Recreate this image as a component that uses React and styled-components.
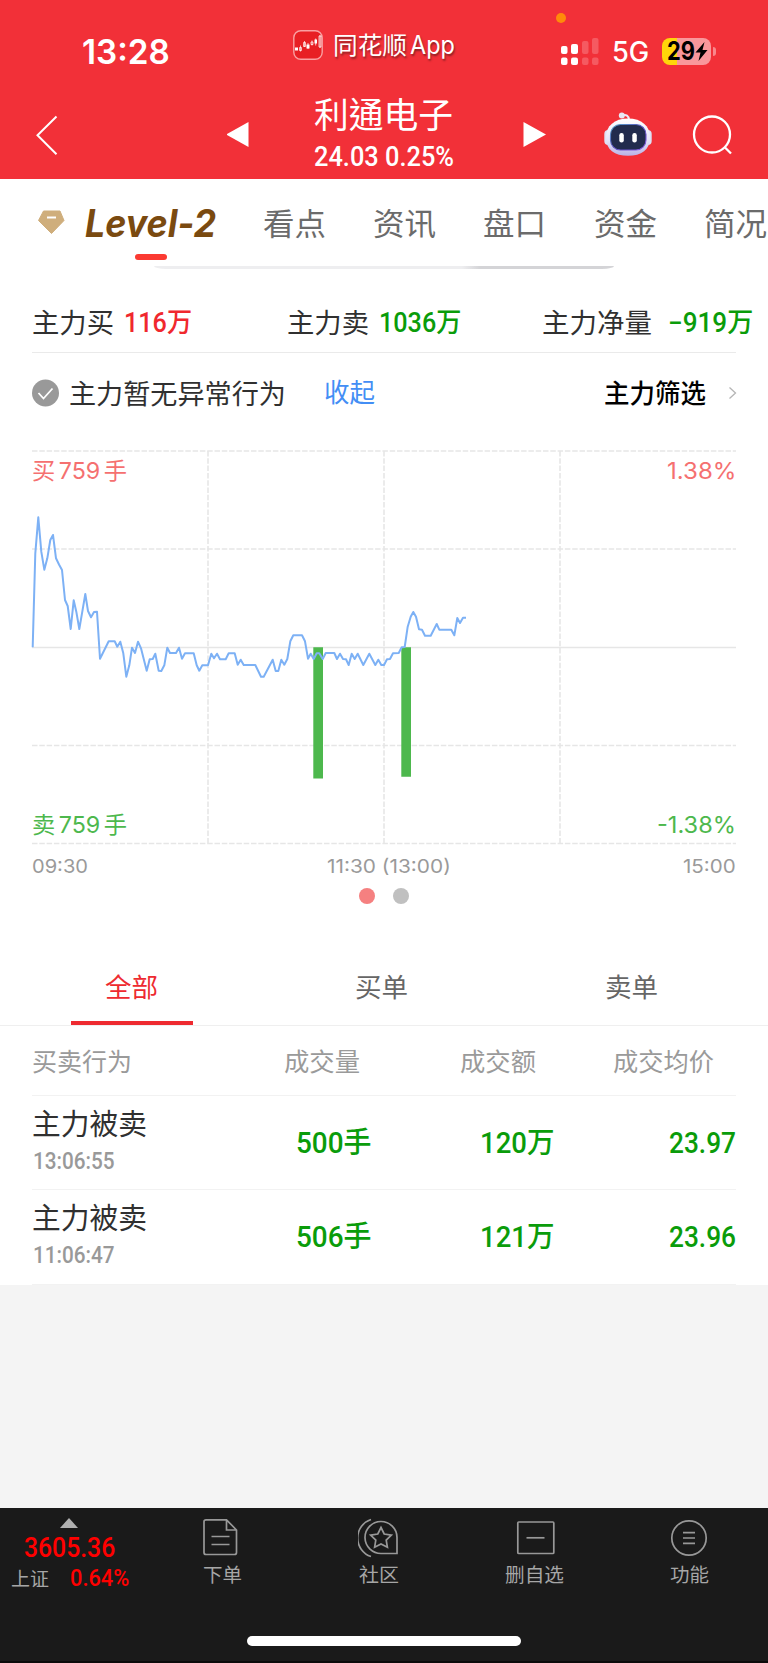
import React, { useLayoutEffect, useRef, useState } from "react";
import styled, { createGlobalStyle } from "styled-components";

const GlobalStyle = createGlobalStyle`
  *, *::before, *::after { box-sizing: border-box; }
  body { margin: 0; background: #f4f4f4; font-family: "Noto Sans CJK SC", "Noto Sans", sans-serif; }
`;

const families = {
  cjk: '"Noto Sans CJK SC", sans-serif',
  tc: '"Noto Sans CJK TC", sans-serif',
  num: 'Roboto, "Noto Sans CJK SC", sans-serif',
  ui: 'Inter, "Noto Sans CJK SC", sans-serif',
};

const FitBox = styled.span`
  display: block;
  flex: none;
  width: ${(p) => p.$w}px;
  height: ${(p) => p.$size}px;
  margin-top: ${(p) => p.$dy || 0}px;
  margin-left: ${(p) => p.$ml || 0}px;
`;

const FitText = styled.span`
  display: inline-block;
  white-space: pre;
  transform-origin: 0 50%;
  font-family: ${(p) => families[p.$font || "cjk"]};
  font-size: ${(p) => p.$size}px;
  line-height: ${(p) => p.$size}px;
  font-weight: ${(p) => p.$weight || 400};
  font-style: ${(p) => (p.$italic ? "italic" : "normal")};
  word-spacing: ${(p) => p.$gap || 0}px;
  color: ${(p) => p.$color || "inherit"};
  text-shadow: ${(p) => p.$shadow || "none"};
  vertical-align: top;
`;

/* Text condensed or widened horizontally to fill a given width. */
function Label({ w, size, dy, ml, children, ...rest }) {
  const ref = useRef(null);
  const [scale, setScale] = useState(1);
  useLayoutEffect(() => {
    setScale(w / ref.current.offsetWidth);
  }, [w, children]);
  const style = { transform: `scaleX(${scale})` };
  const look = Object.fromEntries(Object.entries(rest).map(([k, v]) => ["$" + k, v]));
  return (
    <FitBox $w={w} $size={size} $dy={dy} $ml={ml}>
      <FitText ref={ref} $size={size} {...look} style={style}>{children}</FitText>
    </FitBox>
  );
}

const Screen = styled.div`
  width: 768px;
  height: 1663px;
  display: flex;
  flex-direction: column;
  background: #f4f4f4;
  overflow: hidden;
`;

/* ---------- header ---------- */
const Header = styled.header`
  flex: none;
  height: 179px;
  background: #f23038;
  color: #fff;
  position: relative;
`;
const StatusBar = styled.div`
  height: 90px;
  padding: 29px 0 0 82px;
  display: flex;
  align-items: flex-start;
`;
const AppIcon = styled.svg`margin: 1px 0 0 123px;`;
const Signal = styled.svg`margin: 8px 0 0 105px;`;
const Battery = styled.div`
  position: relative;
  width: 49px;
  height: 27px;
  margin: 9px 0 0 13px;
  padding: 0 3px 0 5px;
  border-radius: 8px;
  background: linear-gradient(90deg, #ffd60a 15px, #f9979b 15px);
  display: flex;
  align-items: center;
  &::after {
    content: "";
    position: absolute;
    right: -5px;
    top: 9px;
    width: 3px;
    height: 9px;
    border-radius: 0 4px 4px 0;
    background: #f9878c;
  }
`;
const Recording = styled.i`
  position: absolute;
  left: 556px;
  top: 13px;
  width: 10px;
  height: 10px;
  border-radius: 50%;
  background: #ff8a0a;
`;
const TitleBar = styled.div`
  height: 89px;
  padding-left: 34px;
  display: flex;
  align-items: flex-start;
`;
const BarIcon = styled.svg`
  flex: none;
  margin-top: ${(p) => p.$top}px;
  margin-left: ${(p) => p.$left || 0}px;
`;
const StockTitle = styled.div`
  width: 140px;
  margin-left: 64px;
  padding-top: 5px;
  display: flex;
  flex-direction: column;
`;

/* ---------- section tabs ---------- */
const White = styled.section`
  flex: none;
  background: #fff;
`;
const SectionTabs = styled.nav`
  height: 75px;
  padding: 27px 0 0 36px;
  display: flex;
  align-items: flex-start;
  overflow: hidden;
`;
const TabMark = styled.div`
  width: 32px;
  height: 6px;
  margin-left: 135px;
  border-radius: 3px;
  background: #fb3a32;
`;
const Strip = styled.div`
  width: 460px;
  height: 3px;
  margin: 6px 0 0 154px;
  border-radius: 0 0 12px 12px / 0 0 3px 3px;
  background: linear-gradient(90deg, #eeeef0 308px, #d4d4d7 326px);
`;

/* ---------- totals ---------- */
const Totals = styled.div`
  height: 83px;
  margin: 0 0 0 32px;
  padding-top: 39px;
  width: 736px;
  display: flex;
  align-items: flex-start;
`;
const Rule = styled.div`
  height: 1px;
  margin: 0 32px;
  background: ${(p) => p.$color || "#eaeaea"};
`;
const Notice = styled.div`
  height: 82px;
  padding: 26px 0 0 32px;
  display: flex;
  align-items: flex-start;
`;

/* ---------- chart ---------- */
const ChartArea = styled.div`
  position: relative;
  height: 414px;
`;
const ChartSvg = styled.svg`display: block;`;
const ChartCaption = styled.div`
  position: absolute;
  left: ${(p) => p.$x}px;
  top: ${(p) => p.$y}px;
`;
const Axis = styled.div`
  height: 25px;
  padding: 8px 32px 0;
  display: flex;
  justify-content: space-between;
  color: #9a9a9a;
`;
const Dots = styled.div`
  height: 66px;
  padding-top: 14px;
  display: flex;
  justify-content: center;
  gap: 18px;
`;
const Dot = styled.i`
  width: 16px;
  height: 16px;
  border-radius: 50%;
  background: ${(p) => (p.$on ? "#f58080" : "#c0c0c0")};
`;

/* ---------- orders ---------- */
const OrderTabs = styled.div`
  height: 86px;
  padding-left: 7px;
  display: grid;
  grid-template-columns: repeat(3, 250px);
  border-bottom: 1px solid #efefef;
`;
const OrderTab = styled.div`
  display: flex;
  flex-direction: column;
  align-items: center;
  padding-top: 33px;
  color: ${(p) => (p.$on ? "#ee2a30" : "#666")};
  &::after {
    content: "";
    width: 122px;
    height: 4px;
    margin-top: 22px;
    background: ${(p) => (p.$on ? "#ee2a30" : "transparent")};
  }
`;
const TableHead = styled.div`
  height: 69px;
  padding: 22px 0 0 32px;
  display: flex;
  color: #9a9a9a;
`;
const OrderRow = styled.div`
  height: ${(p) => p.$h}px;
  padding-left: 32px;
  display: flex;
  color: #0a9c0a;
`;
const Action = styled.div`
  width: 264px;
  padding-top: 12px;
  display: flex;
  flex-direction: column;
`;

/* ---------- bottom bar ---------- */
const Footer = styled.footer`
  flex: none;
  height: 155px;
  margin-top: auto;
  background: #1a1a1a;
  border-bottom: 2px solid #0b0b0b;
  color: #a6a6a6;
`;
const FooterRow = styled.div`
  height: 128px;
  display: flex;
`;
const IndexBox = styled.div`
  flex: none;
  width: 147px;
  padding-top: 10px;
`;
const Up = styled.svg`display: block; margin-left: 60px;`;
const IndexLine = styled.div`
  display: flex;
  padding-left: 11px;
`;
const NavItem = styled.div`
  width: ${(p) => p.$w}px;
  flex: none;
  padding-top: 8px;
  display: flex;
  flex-direction: column;
  align-items: center;
`;
const HomeBar = styled.div`
  width: 274px;
  height: 10px;
  margin-left: 247px;
  border-radius: 5px;
  background: #fff;
`;

const LINE =
  "32.7,647.3 35.3,553.3 38.3,517.3 41.3,551.7 44.3,569.7 47.3,558.3 50.3,540 53,535 56,558.3 59,564.5 62,570 65,600 67.7,606 70.7,629 73.7,600.3 76.3,611.7 79.3,629 82.3,611.7 85.3,594 88,611 91,617.3 94,612 97,611.7 100,658.7 108.7,641.3 114.7,641.3 117.3,646.7 120.3,641.7 123.3,653.3 126.3,676.7 129.3,665.3 132,647.7 135,653 138,641.7 141,648.3 146.7,670.7 149.7,659.3 152.7,659 155.3,653.7 158.7,670.7 161.3,671 164.3,665.3 167.3,647.7 170,653 176,653 179,647.7 182,658.7 185,653.3 193.7,653.3 196.7,665.3 199.3,670.7 202.3,665.3 208,665.3 211.3,653.7 214,658.3 217,653.7 220,659.3 225.7,659.3 228.7,653.3 234.7,653.3 237.7,664.7 240.7,659.7 243.7,665 255.3,665 261,676.7 263.7,676.7 272.7,659.7 275.7,671 278.3,671 281.3,659.7 284.3,664.7 287.3,659 290.3,641.3 293.3,635.3 302,635.3 305,641.3 308,658.7 310.7,653.7 313.7,659 316.7,653.3 319.3,653.3 322.7,659 325.7,653 334.3,653 337,659 340,653.7 343,659 346,659.3 348.7,665 351.7,653.7 354.7,659 357.7,653.7 363.3,665 369.3,653.7 375.3,665 378.3,659.7 381.3,665 384,665 387,659.3 390,659 393,653.3 398.7,653 401.7,647.3 404.7,647 407.7,626.7 410.7,616.7 413.3,612 416,616.7 419,629.3 422,629.7 425,635.7 430.7,635.7 436.7,624 439.3,629.7 451.3,629.7 454.3,635.3 457.3,618 460,623 463,617.7 466,617.7";

function Chart() {
  return (
    <ChartArea>
      <ChartSvg width="768" height="414" viewBox="0 435 768 414" fill="none">
        <g stroke="#e6e6e6" strokeWidth="1.6">
          {[451, 549, 745.5, 843.5].map((y) => (
            <path key={y} d={`M32 ${y}H736`} strokeDasharray="5.5 1.8" />
          ))}
          {[208, 384, 560].map((x) => (
            <path key={x} d={`M${x} 451V844`} strokeDasharray="5.5 1.8" />
          ))}
          <path d="M32 647.5H736" />
        </g>
        <path d="M313.3 647.3h9.7v131.2h-9.7zM401.3 647.3h9.7v129.4h-9.7z" fill="#4db84d" />
        <polyline points={LINE} stroke="#7db1f5" strokeWidth="2" strokeLinejoin="round" />
      </ChartSvg>
      <ChartCaption $x={32} $y={25}>
        <Label w={95} size={23} font="ui" gap={-3} color="#f57070">买 759 手</Label>
      </ChartCaption>
      <ChartCaption $x={667} $y={25}>
        <Label w={69} size={23} font="ui" color="#f57070">1.38%</Label>
      </ChartCaption>
      <ChartCaption $x={32} $y={379}>
        <Label w={95} size={23} font="ui" gap={-3} color="#4db84d">卖 759 手</Label>
      </ChartCaption>
      <ChartCaption $x={657} $y={379}>
        <Label w={79} size={23} font="ui" color="#4db84d">-1.38%</Label>
      </ChartCaption>
    </ChartArea>
  );
}

function Robot() {
  return (
    <BarIcon $top={21} $left={57} width="50" height="46" viewBox="603 111 50 46" fill="none">
      <defs>
        <linearGradient id="shell" x1="0" y1="0" x2="0" y2="1">
          <stop offset="0" stopColor="#fff" />
          <stop offset=".6" stopColor="#e4e2f8" />
          <stop offset="1" stopColor="#b9b2e6" />
        </linearGradient>
        <linearGradient id="rim" x1="0" y1="0" x2="1" y2="1">
          <stop offset="0" stopColor="#58a8c8" />
          <stop offset=".5" stopColor="#5a4fc0" />
          <stop offset="1" stopColor="#8a5ae0" />
        </linearGradient>
      </defs>
      <path d="M622 115.5c4-1.6 7 .2 7 4.5" stroke="#eceaf8" strokeWidth="2" />
      <circle cx="621.8" cy="115.5" r="3" fill="#e8e8f4" />
      <rect x="604.3" y="130" width="9" height="15" rx="4" fill="#dfe1f5" />
      <rect x="642.7" y="130" width="9" height="15" rx="4" fill="#dfe1f5" />
      <path d="M628 118.5c13.500 0 22 7.500 22 18.500 0 13-8.500 18.800-22 18.800s-22-5.800-22-18.800c0-11 8.500-18.500 22-18.500z" fill="url(#shell)" />
      <rect x="610.5" y="124.500" width="35.5" height="25.500" rx="10" fill="#222b4d" stroke="url(#rim)" strokeWidth="1.100" />
      <rect x="619.3" y="133" width="4.500" height="9.500" rx="2.200" fill="#fff" />
      <rect x="632.3" y="133" width="4.500" height="9.500" rx="2.200" fill="#fff" />
    </BarIcon>
  );
}

const rows = [
  { id: 1, h: 93, time: "13:06:55", vol: "500手", amt: "120万", avg: "23.97" },
  { id: 2, h: 94, time: "11:06:47", vol: "506手", amt: "121万", avg: "23.96" },
];

export default function App() {
  return (
    <Screen>
      <GlobalStyle />
      <Header>
        <StatusBar>
          <Label w={88} size={34} dy={6} font="ui" weight={600}>13:28</Label>
          <AppIcon width="30" height="30" viewBox="0 0 30 30" fill="none">
            <rect x=".8" y=".8" width="28.400" height="28.400" rx="7" fill="#e81f24" stroke="#f9a0a2" strokeWidth="1.400" />
            <path d="M2 17.500h3v3H2zM13.500 14.500h3v4h-3zM21.500 9.500H24v4h-2.500z" fill="#fff" />
            <path d="M6.500 17.500h2v3h-2zM10.500 12.500h2v4h-2zM18 12h2v2.500h-2zM26 6h2v11h-2zM7.500 15.500v6M11.500 11v6M15 13v6M19 10.500v5M22.700 8.500v7M27 5v13" stroke="#fff" strokeWidth=".7" />
          </AppIcon>
          <Label w={74} ml={10} dy={3} size={24} shadow="1px 2px 2px #8a2024">同花顺</Label>
          <Label w={45} ml={3} dy={4} size={25} font="ui" shadow="1px 2px 2px #8a2024">App</Label>
          <Signal width="39" height="29" viewBox="561 37 39 29">
            <g fill="#fff">
              <rect x="562" y="46" width="6.500" height="8" rx="2" />
              <rect x="572" y="44" width="7" height="10" rx="2" />
              <rect x="562" y="57.500" width="6.500" height="7.500" rx="2" />
              <rect x="572" y="57.500" width="7" height="7.500" rx="2" />
            </g>
            <g fill="#f55a61">
              <rect x="583" y="41" width="6.500" height="13" rx="2" />
              <rect x="593" y="38" width="6.500" height="16" rx="2" />
              <rect x="583" y="57.500" width="6.500" height="7.500" rx="2" />
              <rect x="593" y="57.500" width="6.500" height="7.500" rx="2" />
            </g>
          </Signal>
          <Label w={37} ml={13} dy={9} size={28} font="ui" weight={500}>5G</Label>
          <Battery>
            <Label w={28} size={25} font="ui" weight={700} color="#000">29</Label>
            <svg width="13" height="19" viewBox="0 0 13 19">
              <path d="M9.500 0 .5 10.500h5L3.500 19l9-11H7.500z" fill="#000" />
            </svg>
          </Battery>
        </StatusBar>
        <Recording />
        <TitleBar>
          <BarIcon $top={24} width="26" height="42" viewBox="34 114 26 42" fill="none">
            <path d="M56.500 116.500 37.500 135.300l19 19" stroke="#fff" strokeWidth="2" />
          </BarIcon>
          <BarIcon $top={31} $left={167} width="23" height="27" viewBox="0 0 23 27">
            <path d="M-1 13.500 21.500 1v25z" fill="#fff" />
          </BarIcon>
          <StockTitle>
            <Label w={139} size={35} font="tc">利通电子</Label>
            <Label w={140} size={27} dy={14} font="num" weight={500}>24.03 0.25%</Label>
          </StockTitle>
          <BarIcon $top={31} $left={69} width="23" height="27" viewBox="0 0 23 27">
            <path d="M23 13.500.500 1v25z" fill="#fff" />
          </BarIcon>
          <Robot />
          <BarIcon $top={25} $left={38} width="42" height="42" viewBox="691 115 42 42" fill="none" stroke="#fff" strokeWidth="2.300">
            <circle cx="712" cy="134.500" r="18" />
            <path d="m724.500 147 6.500 6.500" />
          </BarIcon>
        </TitleBar>
      </Header>

      <White>
        <SectionTabs>
          <BarIcon $top={3} width="30" height="26" viewBox="36 209 30 26">
            <path d="M43.500 211h16.500l4 9.500L51.500 233.500 38.500 220.500z" fill="#cfae7c" strokeLinejoin="round" stroke="#cfae7c" />
            <path d="M47 217.500h9" stroke="#fff" strokeWidth="2" />
          </BarIcon>
          <Label w={131} ml={19} dy={-2} size={38} font="ui" weight={700} italic color="#7a4a10">Level-2</Label>
          <Label w={63} ml={47} size={31} color="#6b6b6b">看点</Label>
          <Label w={63} ml={47} size={31} color="#6b6b6b">资讯</Label>
          <Label w={63} ml={47} size={31} color="#6b6b6b">盘口</Label>
          <Label w={63} ml={48} size={31} color="#6b6b6b">资金</Label>
          <Label w={63} ml={47} size={31} color="#6b6b6b">简况</Label>
        </SectionTabs>
        <TabMark />
        <Strip />
        <Totals>
          <Label w={82} size={27} color="#303030">主力买</Label>
          <Label w={68} ml={10} size={27} dy={2} font="num" weight={500} color="#f0282e">116万</Label>
          <Label w={82} ml={95} size={27} color="#303030">主力卖</Label>
          <Label w={82} ml={10} size={27} dy={2} font="num" weight={500} color="#0a9c0a">1036万</Label>
          <Label w={110} ml={81} size={27} color="#303030">主力净量</Label>
          <Label w={85} ml={16} size={27} dy={2} font="num" weight={500} color="#0a9c0a">−919万</Label>
        </Totals>
        <Rule />
        <Notice>
          <BarIcon width="27" height="28" viewBox="0 0 27 28" fill="none">
            <circle cx="13.500" cy="14" r="13.500" fill="#999" />
            <path d="m6.500 14 5 5.500 9-10" stroke="#fff" strokeWidth="1.800" />
          </BarIcon>
          <Label w={217} ml={10} size={27} color="#303030">主力暂无异常行为</Label>
          <Label w={51} ml={38} size={26} dy={-1} color="#438ef5">收起</Label>
          <Label w={102} ml={229} size={26} weight={500} color="#000">主力筛选</Label>
          <BarIcon $top={7} $left={22} width="10" height="14" viewBox="0 0 10 14" fill="none">
            <path d="m1.500 1.500 6 5.500-6 5.500" stroke="#b5b5b5" strokeWidth="1.300" />
          </BarIcon>
        </Notice>
        <Chart />
        <Axis>
          <Label w={56} size={19} font="ui">09:30</Label>
          <Label w={124} ml={6} size={19} font="ui">11:30 (13:00)</Label>
          <Label w={53} size={19} font="ui">15:00</Label>
        </Axis>
        <Dots><Dot $on /><Dot /></Dots>
        <OrderTabs>
          <OrderTab $on><Label w={53} size={26} ml={-2}>全部</Label></OrderTab>
          <OrderTab><Label w={53} size={26} ml={-2}>买单</Label></OrderTab>
          <OrderTab><Label w={53} size={26} ml={-2}>卖单</Label></OrderTab>
        </OrderTabs>
        <TableHead>
          <Label w={100} size={25}>买卖行为</Label>
          <Label w={76} ml={152} size={25}>成交量</Label>
          <Label w={76} ml={100} size={25}>成交额</Label>
          <Label w={101} ml={77} size={25}>成交均价</Label>
        </TableHead>
        <Rule $color="#f2f2f2" />
        {rows.map((r) => (
          <React.Fragment key={r.id}>
            <OrderRow $h={r.h}>
              <Action>
                <Label w={115} size={29} color="#303030">主力被卖</Label>
                <Label w={82} ml={1} size={24} dy={12} font="num" weight={500} color="#999">{r.time}</Label>
              </Action>
              <Label w={75} size={29} dy={33} font="num" weight={500}>{r.vol}</Label>
              <Label w={74} ml={109} size={29} dy={33} font="num" weight={500}>{r.amt}</Label>
              <Label w={67} ml={115} size={29} dy={33} font="num" weight={500}>{r.avg}</Label>
            </OrderRow>
            <Rule $color="#f2f2f2" />
          </React.Fragment>
        ))}
      </White>

      <Footer>
        <FooterRow>
          <IndexBox>
            <Up width="18" height="10" viewBox="0 0 18 10"><path d="M0 10 9 0l9 10z" fill="#b0b0b0" /></Up>
            <Label w={91} ml={24} dy={6} size={28} font="num" weight={500} color="#ff0000">3605.36</Label>
            <IndexLine>
              <Label w={38} size={19} dy={6} font="cjk">上证</Label>
              <Label w={59} ml={21} dy={4} size={24} font="num" weight={500} color="#ff0000">0.64%</Label>
            </IndexLine>
          </IndexBox>
          <NavItem $w={150}>
            <svg width="40" height="44" viewBox="202.500 1516 40 44" fill="none" stroke="#989898" strokeWidth="1.700">
              <path d="M206.500 1519.800h20.500l10 10.200v22.500q0 2-2 2h-28.500q-2 0-2-2v-30.700q0-2 2-2zM227 1520v10h10M212 1536.500h18M212 1544.500h18" />
            </svg>
            <Label w={39} size={19} dy={4}>下单</Label>
          </NavItem>
          <NavItem $w={164}>
            <svg width="42" height="44" viewBox="358 1516 42 44" fill="none" stroke="#989898" strokeWidth="1.700">
              <path d="M371 1519.500a19.500 19.500 0 0 0 0 37M397 1553.500h-15.500a16 16 0 1 1 15.500-16z" />
              <path d="m381 1527.500 3.200 6.500 7.200 1.100-5.200 5 1.200 7.200-6.400-3.400-6.400 3.400 1.200-7.200-5.200-5 7.200-1.100z" />
            </svg>
            <Label w={40} size={19} dy={4}>社区</Label>
          </NavItem>
          <NavItem $w={146}>
            <svg width="42" height="44" viewBox="513 1516 42 44" fill="none" stroke="#989898" strokeWidth="1.700">
              <rect x="517.800" y="1522" width="36" height="31.500" rx="1" />
              <path d="M526.500 1537.800h18" />
            </svg>
            <Label w={59} size={19} dy={4} font="tc">删自选</Label>
          </NavItem>
          <NavItem $w={164}>
            <svg width="42" height="44" viewBox="668 1516 42 44" fill="none" stroke="#989898" strokeWidth="1.700">
              <circle cx="689" cy="1538" r="17.200" />
              <path d="M683 1532.700h12M683 1538h12M683 1543.300h12" />
            </svg>
            <Label w={39} size={19} dy={4}>功能</Label>
          </NavItem>
        </FooterRow>
        <HomeBar />
      </Footer>
    </Screen>
  );
}
